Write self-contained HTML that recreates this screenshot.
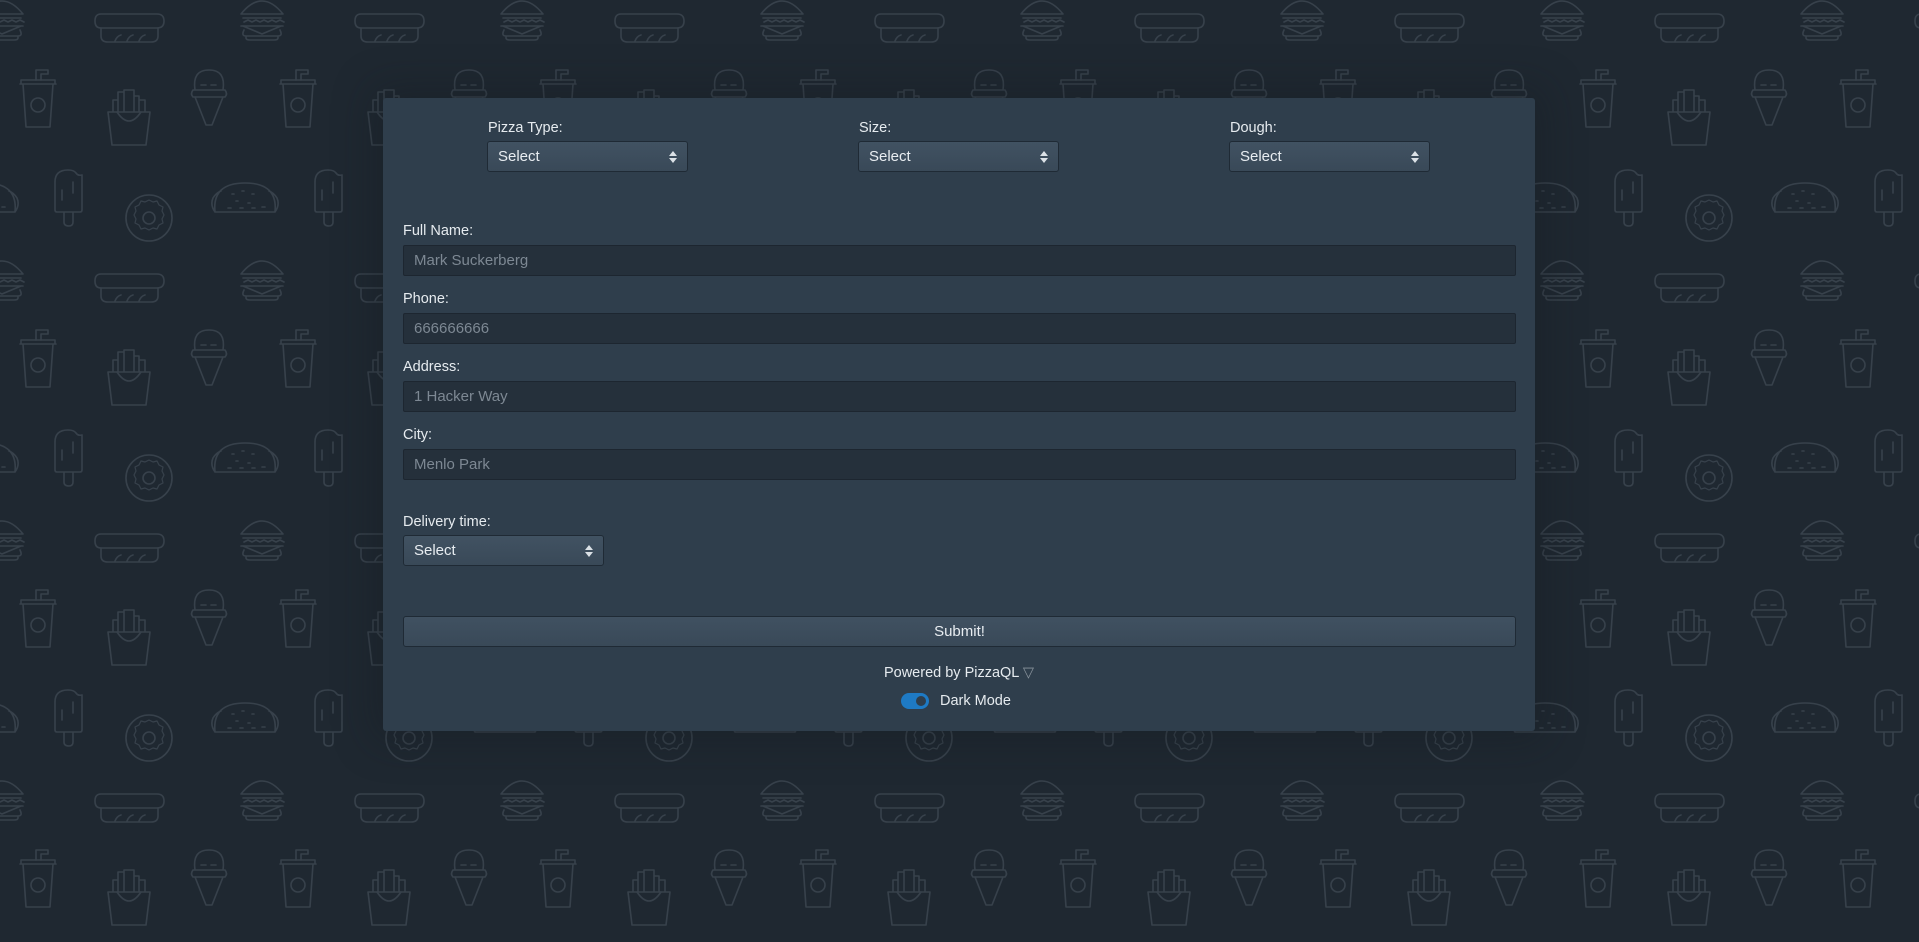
<!DOCTYPE html>
<html><head><meta charset="utf-8"><style>
html,body{margin:0;padding:0;width:1919px;height:942px;overflow:hidden;background:#1f2831;font-family:"Liberation Sans",sans-serif;}
#bg{position:absolute;left:0;top:0}
.card{position:absolute;left:383px;top:98px;width:1152px;height:633px;background:#2f3e4c;border-radius:3px;box-shadow:0 0 40px 10px rgba(20,26,32,.35);}
.lbl{position:absolute;color:#e6ebef;font-size:14.5px;}
.sel{position:absolute;height:29px;width:199px;border:1px solid #1f2a35;border-radius:3px;background:linear-gradient(#415262,#394958);color:#e8edf1;font-size:15px;line-height:29px;box-sizing:content-box;}
.sel span{position:absolute;left:10px;}
.sel i{position:absolute;right:10px;top:9px;width:0;height:0;border-left:4px solid transparent;border-right:4px solid transparent;border-bottom:5px solid #dbe1e6;}
.sel b{position:absolute;right:10px;top:16px;width:0;height:0;border-left:4px solid transparent;border-right:4px solid transparent;border-top:5px solid #dbe1e6;}
.inp{position:absolute;left:20px;width:1111px;height:29px;background:#25303b;border:1px solid #1d2630;border-radius:2px;color:#7d8893;font-size:15px;line-height:29px;}
.inp span{position:absolute;left:10px;}
.btn{position:absolute;left:20px;top:518px;width:1111px;height:29px;border:1px solid #1f2a35;border-radius:3px;background:linear-gradient(#405161,#394958);color:#e8edf1;font-size:15px;line-height:29px;text-align:center;}
</style></head><body>
<svg id="bg" width="1919" height="942"><defs>
<pattern id="p" x="0" y="0" width="260" height="260" patternUnits="userSpaceOnUse">
<g fill="none" stroke="#37414b" stroke-width="1.6" stroke-linecap="round" stroke-linejoin="round">
<g id="bu"><path d="M241 14 Q262 -12 283 14 Z"/><path d="M243 18 H281 M244 22 l4 -2 4 2 4 -2 4 2 4 -2 4 2 4 -2 4 2 4 -2 4 2"/><path d="M241 26 H283 M243 26 L262 34 L281 26 M244 30 Q241 36 246 36 H278 Q283 36 280 30 M246 36 V38 Q246 40 250 40 H274 Q278 40 278 38 V36"/></g>
<use href="#bu" x="-260"/>
<path d="M101 14 H157 Q164 14 164 21 Q164 28 157 28 H101 Q95 28 95 21 Q95 14 101 14 Z"/><path d="M101 28 V36 Q101 42 108 42 H151 Q158 42 158 36 V28 M115 41 Q117 36 121 35 M127 41 Q129 36 133 35 M139 41 Q141 36 145 35"/>
<path d="M20 84 H56 M21 84 V80 H55 V84 M23 84 L26 127 H50 L53 84"/><circle cx="38" cy="105" r="7"/><path d="M36 80 V70 H48 V74 H41 V80"/>
<path d="M108 112 H150 L146 145 H112 Z M113 112 V100 H118 V112 M118 104 V92 H124 V112 M124 96 V90 H134 V112 M134 96 H139 V112 M139 100 H145 V112"/><path d="M117 112 Q129 130 141 112"/>
<path d="M195 90 Q192 70 209 70 Q226 70 223 90 M193 90 H225 Q228 94 225 97 H193 Q190 94 193 90 Z M195 97 L206 125 H212 L223 97 M201 85 H206 M211 85 H216"/>
<path d="M55 182 Q55 170 68 170 Q74 170 76 173 Q78 176 82 175 V210 Q82 212 80 212 H57 Q55 212 55 210 Z M64 212 V222 Q64 226 69 226 Q73 226 73 222 V212 M62 190 V200 M73 182 V193"/>
<circle cx="149" cy="218" r="23"/><circle cx="149" cy="218" r="6"/><path d="M149 200 l4 2 4 -1 2 4 4 2 -1 4 2 4 -2 4 1 4 -4 2 -2 4 -4 -1 -4 2 -4 -2 -4 1 -2 -4 -4 -2 1 -4 -2 -4 2 -4 -1 -4 4 -2 2 -4 4 1 Z" stroke-width="1.2"/>
<g id="ta"><path d="M215 212 Q212 183 245 183 Q278 183 275 212 Z M215 212 Q210 205 213 198 Q216 193 221 191 M275 212 Q280 205 277 198 Q274 193 269 191 M232 194 h2 M242 191 h2 M252 194 h2 M236 201 h2 M248 203 h2 M228 208 h3 M240 208 h3 M252 208 h3 M262 207 h3" /></g>
<use href="#ta" x="-260"/>
</g></pattern></defs>
<rect width="1919" height="942" fill="url(#p)"/></svg>
<div class="card">
<div class="lbl" style="left:105px;top:22px">Pizza Type:</div>
<div class="sel" style="left:104px;top:43px"><span>Select</span><i></i><b></b></div>
<div class="lbl" style="left:476px;top:22px">Size:</div>
<div class="sel" style="left:475px;top:43px"><span>Select</span><i></i><b></b></div>
<div class="lbl" style="left:847px;top:22px">Dough:</div>
<div class="sel" style="left:846px;top:43px"><span>Select</span><i></i><b></b></div>
<div class="lbl" style="left:20px;top:125px">Full Name:</div>
<div class="inp" style="top:147px"><span>Mark Suckerberg</span></div>
<div class="lbl" style="left:20px;top:193px">Phone:</div>
<div class="inp" style="top:215px"><span>666666666</span></div>
<div class="lbl" style="left:20px;top:261px">Address:</div>
<div class="inp" style="top:283px"><span>1 Hacker Way</span></div>
<div class="lbl" style="left:20px;top:329px">City:</div>
<div class="inp" style="top:351px"><span>Menlo Park</span></div>
<div class="lbl" style="left:20px;top:416px">Delivery time:</div>
<div class="sel" style="left:20px;top:437px"><span>Select</span><i></i><b></b></div>
<div class="btn">Submit!</div>
<div class="lbl" style="left:0;width:1152px;text-align:center;top:567px">Powered by PizzaQL <span style="color:#8a949d">&#9661;</span></div>
<div style="position:absolute;left:518px;top:595px;width:28px;height:16px;border-radius:8px;background:#1e7ac4"><div style="position:absolute;right:3px;top:3px;width:10px;height:10px;border-radius:50%;background:#2f3e4c"></div></div>
<div class="lbl" style="left:557px;top:595px">Dark Mode</div>
</div>
</body></html>
